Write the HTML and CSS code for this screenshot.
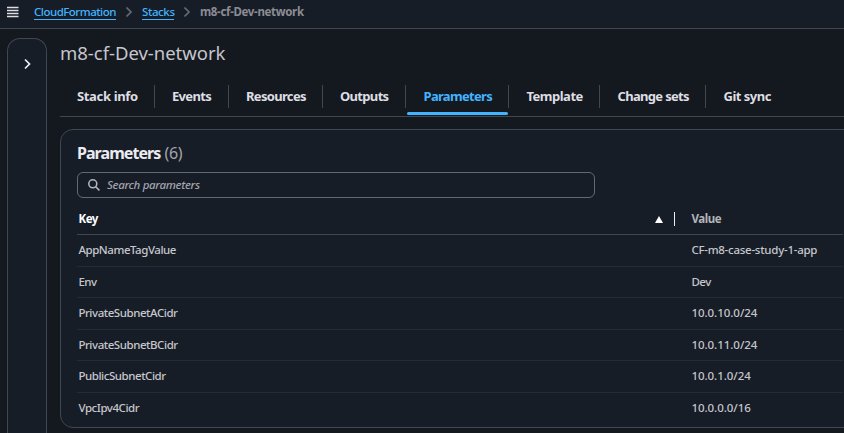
FILE: index.html
```
<!DOCTYPE html>
<html lang="en">
<head>
<meta charset="utf-8">
<title>m8-cf-Dev-network</title>
<link rel="stylesheet" href="styles.css">
</head>
<body>
<header class="topbar">
  <svg class="menu" viewBox="0 0 12 12" width="12" height="12"><path d="M0 1.5h11.5M0 4.5h11.5M0 7.5h11.5M0 10.5h11.5"/></svg>
  <nav class="crumbs">
    <a class="crumb-cf" href="#">CloudFormation</a>
    <svg class="sep" viewBox="0 0 6 10" width="6" height="10"><path d="M.5.5 5 5 .5 9.5"/></svg>
    <a class="crumb-stacks" href="#">Stacks</a>
    <svg class="sep" viewBox="0 0 6 10" width="6" height="10"><path d="M.5.5 5 5 .5 9.5"/></svg>
    <span class="current">m8-cf-Dev-network</span>
  </nav>
</header>
<div class="layout">
  <aside class="rail"><svg viewBox="0 0 8 12" width="8" height="12"><path d="M2 1.5 6.5 6 2 10.5"/></svg></aside>
  <main>
    <h1>m8-cf-Dev-network</h1>
    <nav class="tabs">
      <a class="wide"><span>Stack info</span></a><a><span>Events</span></a><a><span>Resources</span></a><a><span>Outputs</span></a><a class="active"><span>Parameters</span></a><a><span>Template</span></a><a><span>Change sets</span></a><a><span>Git sync</span></a>
    </nav>
    <section class="panel">
      <h2>Parameters <span>(6)</span></h2>
      <div class="search">
        <svg viewBox="0 0 12 12" width="12" height="12"><circle cx="4.8" cy="4.8" r="4"/><path d="m7.7 7.7 3.7 3.7"/></svg>
        <span>Search parameters</span>
      </div>
      <div class="table">
        <div class="row head"><div class="key"><span>Key</span><svg viewBox="0 0 8 7" width="8" height="7"><path d="M4 0 8 7H0z"/></svg></div><div class="value">Value</div></div>
        <div class="row"><div>AppNameTagValue</div><div class="app">CF-m8-case-study-1-app</div></div>
        <div class="row"><div>Env</div><div>Dev</div></div>
        <div class="row"><div>PrivateSubnetACidr</div><div class="ip">10.0.10.0/24</div></div>
        <div class="row"><div>PrivateSubnetBCidr</div><div class="ip">10.0.11.0/24</div></div>
        <div class="row"><div>PublicSubnetCidr</div><div class="ip">10.0.1.0/24</div></div>
        <div class="row"><div>VpcIpv4Cidr</div><div class="ip">10.0.0.0/16</div></div>
      </div>
    </section>
  </main>
</div>
</body>
</html>
```
FILE: styles.css
```
* { box-sizing: border-box; }
body { margin: 0; height: 433px; overflow: hidden; background: #14181f; color: #c6c6cd; font: 500 11.5px/16px "Noto Sans", sans-serif; display: flex; flex-direction: column; }
svg { fill: none; stroke: currentColor; flex: none; }
.topbar { flex: none; height: 29px; padding: 0 0 4px 7px; background: #161d26; border-bottom: 1px solid #424650; display: flex; align-items: center; }
.menu { stroke: #dedee3; stroke-width: 1.4; }
.crumbs { display: flex; align-items: center; margin-left: 15px; line-height: 14px; }
.crumbs a { color: #42b4ff; text-decoration: none; border-bottom: 1px solid #42b4ff; height: 15px; white-space: nowrap; letter-spacing: -.5px; }
.crumbs .crumb-cf { width: 82px; }
.crumbs .crumb-stacks { width: 32px; letter-spacing: -.4px; }
.sep { margin: 0 10px; color: #656871; stroke-width: 1.6; }
.current { color: #8c8c94; font-weight: 700; letter-spacing: -.34px; }
.layout { flex: 1; display: flex; min-height: 0; padding: 9px 0 0 7px; }
.rail { width: 40px; flex: none; border: 1px solid #424650; border-bottom: 0; border-radius: 13px 13px 0 0; background: #161d26; display: flex; justify-content: center; padding-top: 19px; color: #f0f0f4; stroke-width: 1.7; }
main { flex: none; width: 800px; margin-left: 13px; }
h1 { margin: 0; font-size: 18.5px; line-height: 30px; font-weight: 400; height: 40px; letter-spacing: -.02px; }
.tabs { height: 39px; border-bottom: 1px solid #424650; display: grid; grid-template-columns: 95px 74px 94px 83px 103px 91px 106px 90px; padding-top: 7px; font-size: 13px; line-height: 23px; font-weight: 700; color: #dedee3; letter-spacing: -.68px; }
.tabs a { height: 23px; padding-left: 17px; border-right: 1px solid #424650; white-space: nowrap; }
.tabs .wide { letter-spacing: -.35px; }
.tabs a:last-child { border-right: 0; letter-spacing: -.5px; }
.tabs .active { color: #42b4ff; position: relative; padding-left: 17.5px; }
.tabs a:nth-child(n+6) { padding-left: 17.5px; }
.tabs a:nth-child(6) { letter-spacing: -.5px; }
.tabs .active::after { content: ""; position: absolute; left: 1px; right: 0; top: 27px; height: 3px; border-radius: 2px; background: #42b4ff; }
.panel { margin-top: 12px; height: 299px; border: 1px solid #424650; border-radius: 13px; background: #161d26; padding: 13px 16px 0; }
h2 { margin: 0; font-size: 16px; line-height: 20px; height: 29px; color: #ebebf0; letter-spacing: -.95px; }
h2 span { font-weight: 400; color: #a4a4ad; letter-spacing: -.3px; margin-left: 1px; }
.search { width: 518px; height: 26px; border: 1px solid #656871; border-radius: 6px; display: flex; align-items: center; gap: 7px; padding-left: 10px; color: #a4a4ad; font-style: italic; letter-spacing: -.32px; }
.search svg { stroke-width: 1.6; color: #b4b4bb; }
.table { margin-top: 6px; }
.row { height: 31.5px; border-bottom: 1px solid #232b37; display: grid; grid-template-columns: 613px 1fr; align-items: center; padding-left: 1.4px; white-space: nowrap; letter-spacing: -.45px; }
.row:last-child { border-bottom: 0; padding-bottom: 1px; }
.row.head { height: 31px; border-color: #424650; font-weight: 700; letter-spacing: -.4px; }
.app { letter-spacing: -.26px; }
.ip { letter-spacing: -.04px; }
.key { display: flex; align-items: center; height: 14px; width: 597px; justify-content: space-between; padding-right: 11px; border-right: 1px solid #ebebf0; color: #fff; }
.key svg { fill: #fff; stroke: none; }
.value { color: #b4b4bb; }
```
